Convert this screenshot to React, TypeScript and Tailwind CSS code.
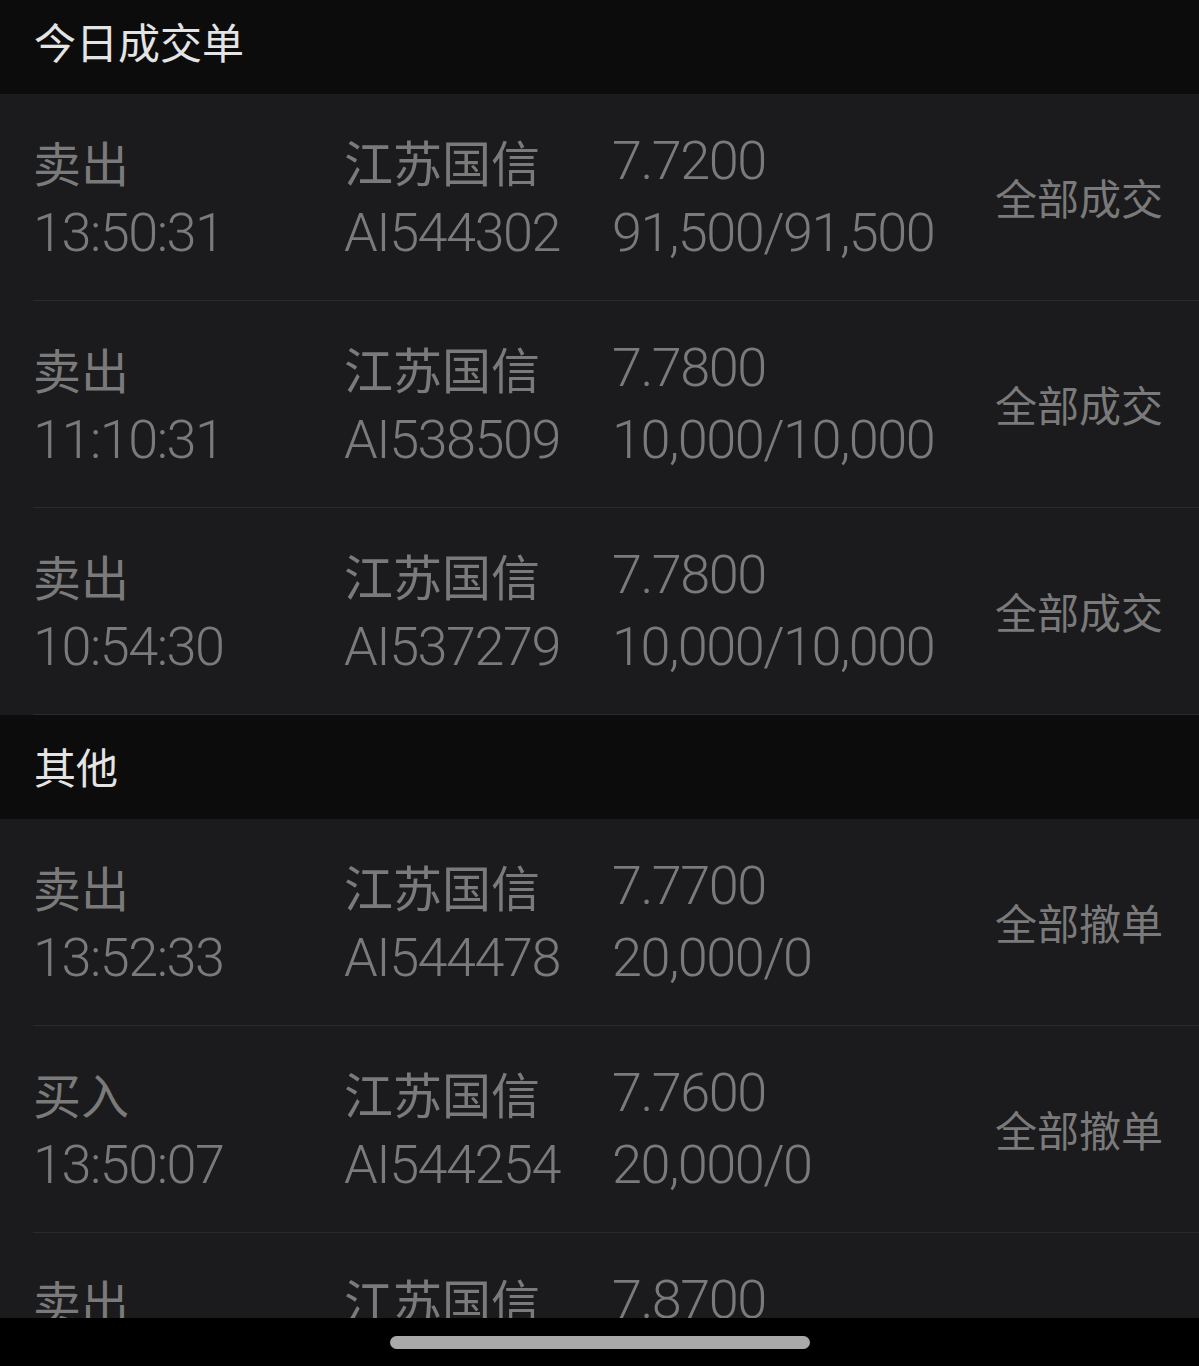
import React from "react";

type Row = { side: string; time: string; name: string; code: string; price: string; qty: string; status: string };

const today: Row[] = [
  { side: "卖出", time: "13:50:31", name: "江苏国信", code: "AI544302", price: "7.7200", qty: "91,500/91,500", status: "全部成交" },
  { side: "卖出", time: "11:10:31", name: "江苏国信", code: "AI538509", price: "7.7800", qty: "10,000/10,000", status: "全部成交" },
  { side: "卖出", time: "10:54:30", name: "江苏国信", code: "AI537279", price: "7.7800", qty: "10,000/10,000", status: "全部成交" },
];

const others: Row[] = [
  { side: "卖出", time: "13:52:33", name: "江苏国信", code: "AI544478", price: "7.7700", qty: "20,000/0", status: "全部撤单" },
  { side: "买入", time: "13:50:07", name: "江苏国信", code: "AI544254", price: "7.7600", qty: "20,000/0", status: "全部撤单" },
  { side: "卖出", time: "13:49:12", name: "江苏国信", code: "AI544101", price: "7.8700", qty: "20,000/0", status: "全部撤单" },
];

const cjk = "font-['Noto_Sans_CJK_SC','Noto_Sans',sans-serif]";
const num = "font-['Roboto','Noto_Sans_CJK_SC',sans-serif] font-light text-[54px] tracking-[-1.5px]";

function TradeRow({ r }: { r: Row }) {
  return (
    <div className="bg-[#1b1b1d]">
      <div className="ml-[33px] flex h-[207px] items-center border-b border-[#2a2a2d] text-[#7a7a7a]">
        <div className="flex w-[311px] flex-col">
          <div className={`h-[72px] text-[48px] leading-[72px] ${cjk}`}>{r.side}</div>
          <div className={`h-[72px] leading-[72px] ${num}`}>{r.time}</div>
        </div>
        <div className="flex w-[268px] flex-col">
          <div className={`h-[72px] text-[49px] leading-[72px] ${cjk}`}>{r.name}</div>
          <div className={`h-[72px] leading-[72px] ${num}`}>{r.code}</div>
        </div>
        <div className="flex flex-1 flex-col">
          <div className={`h-[72px] leading-[72px] ${num}`}>{r.price}</div>
          <div className={`h-[72px] leading-[72px] ${num}`}>{r.qty}</div>
        </div>
        <div className={`pr-[36px] text-[42px] leading-none ${cjk}`}>{r.status}</div>
      </div>
    </div>
  );
}

function SectionHeader({ title, h }: { title: string; h: string }) {
  return (
    <div className={`flex items-center bg-[#0c0c0c] pl-[34px] ${h}`}>
      <span className={`text-[42px] leading-none text-[#e4e4e4] ${cjk}`}>{title}</span>
    </div>
  );
}

export default function App() {
  return (
    <div className="flex h-[1366px] w-[1199px] flex-col overflow-hidden bg-[#1b1b1d]">
      <div className="flex-1 overflow-hidden">
        <SectionHeader title="今日成交单" h="h-[94px] pb-[12px]" />
        {today.map((r, i) => (
          <TradeRow key={i} r={r} />
        ))}
        <SectionHeader title="其他" h="h-[104px] pb-[2px]" />
        {others.map((r, i) => (
          <TradeRow key={i} r={r} />
        ))}
      </div>
      <div className="flex h-[48px] shrink-0 items-start justify-center bg-black pt-[18px]">
        <div className="h-[13px] w-[420px] rounded-full bg-[#a9a9a9]" />
      </div>
    </div>
  );
}
